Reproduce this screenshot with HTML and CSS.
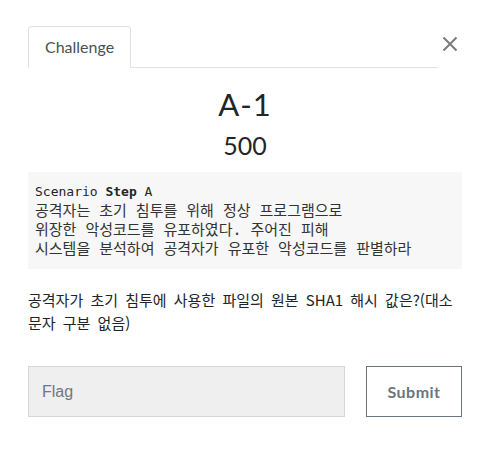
FILE: index.html
```html
<!DOCTYPE html>
<html lang="ko">
<head>
    <meta charset="UTF-8">
    <meta name="viewport" content="width=device-width, initial-scale=1.0">
    <title>Challenge</title>
    <link rel="stylesheet" href="styles.css">
</head>
<body>
    <div class="modal">
        <div class="modal-head">
            <ul class="tabs">
                <li class="tab active">Challenge</li>
            </ul>
            <button class="close" type="button" aria-label="Close">
                <svg width="16" height="16" viewBox="0 0 16 16">
                    <path d="M1.5 1.5 L14.5 14.5 M14.5 1.5 L1.5 14.5" stroke="#7b7b7b" stroke-width="2" fill="none"/>
                </svg>
            </button>
        </div>
        <h2 class="chal-name">A-1</h2>
        <h3 class="chal-value">500</h3>
        <pre class="chal-desc"><span class="first">Scenario <b>Step</b> A</span><span class="ko">공격자는 초기 침투를 위해 정상 프로그램으로
위장한 악성코드를 유포하였다. 주어진 피해
시스템을 분석하여 공격자가 유포한 악성코드를 판별하라</span></pre>
        <p class="question">공격자가 초기 침투에 사용한 파일의 원본 SHA1 해시 값은?(대소문자 구분 없음)</p>
        <form class="answer">
            <input type="text" class="flag-input" placeholder="Flag">
            <button type="button" class="btn-submit">Submit</button>
        </form>
    </div>
</body>
</html>
```

FILE: styles.css
```css
body{
    margin: 0;
    background-color: #ffffff;
    color: #212529;
    font-family: Lato, "Noto Sans CJK KR", sans-serif;
}
.modal{
    padding: 26px 24px 0 28px;	/* 모달 안쪽 여백 */
}
.modal-head{
    display: flex;
    align-items: flex-start;
}
.tabs{
    flex: 1;
    display: flex;
    margin: 0;
    padding: 0;
    list-style: none;
    border-bottom: 1px solid #dee2e6;
}
.tab{
    margin-bottom: -1px;
    padding: 8px 16px;
    line-height: 24px;
    font-size: 16px;
    color: #495057;
    border: 1px solid #dee2e6;
    border-bottom-color: #ffffff;
    border-radius: 4px 4px 0 0;
    background: #ffffff;
}
.close{
    width: 24px;
    height: 26px;
    margin-top: 5px;
    padding: 0;
    border: none;
    background: none;
    display: flex;
    align-items: center;
    justify-content: center;
}
.chal-name{
    margin: 16px 0 0;
    text-align: center;
    font-size: 31px;
    font-weight: 400;
    line-height: 40px;
    letter-spacing: 1px;
}
.chal-value{
    margin: 5px 0 0;
    text-align: center;
    font-size: 25px;
    font-weight: 400;
    line-height: 32px;
}
.chal-desc{
    margin: 11px 0 0;
    padding: 9px 7px 10px;
    background-color: #f7f7f7;
    font-family: "DejaVu Sans Mono", "Noto Sans CJK KR", monospace;
    font-size: 13px;
    color: #212529;
    white-space: pre;
}
.chal-desc .first{
    display: block;
    line-height: 21px;
}
.chal-desc .ko{
    display: block;
    font-size: 15px;
    line-height: 19px;
    color: #333333;
}
.question{
    margin: 19px 0 0;
    font-family: "Noto Sans CJK KR", sans-serif;
    font-size: 15px;
    line-height: 23px;
    word-spacing: 3px;
}
.answer{
    display: flex;
    gap: 21px;
    margin-top: 32px;
}
.flag-input{
    width: 317px;
    height: 51px;
    box-sizing: border-box;
    padding: 0 13px;
    border: 1px solid #d3d6da;
    background-color: #efefef;
    font-family: "Liberation Sans", Arial, sans-serif;
    font-size: 16px;
    color: #495057;
    outline: none;
}
.flag-input::placeholder{
    color: #6f7780;
}
.btn-submit{
    width: 96px;
    height: 51px;
    box-sizing: border-box;
    border: 1px solid #6c757d;
    background: #ffffff;
    color: #6c757d;
    font-family: Lato, sans-serif;
    font-weight: 700;
    font-size: 16px;
    letter-spacing: 0.5px;
}
```
